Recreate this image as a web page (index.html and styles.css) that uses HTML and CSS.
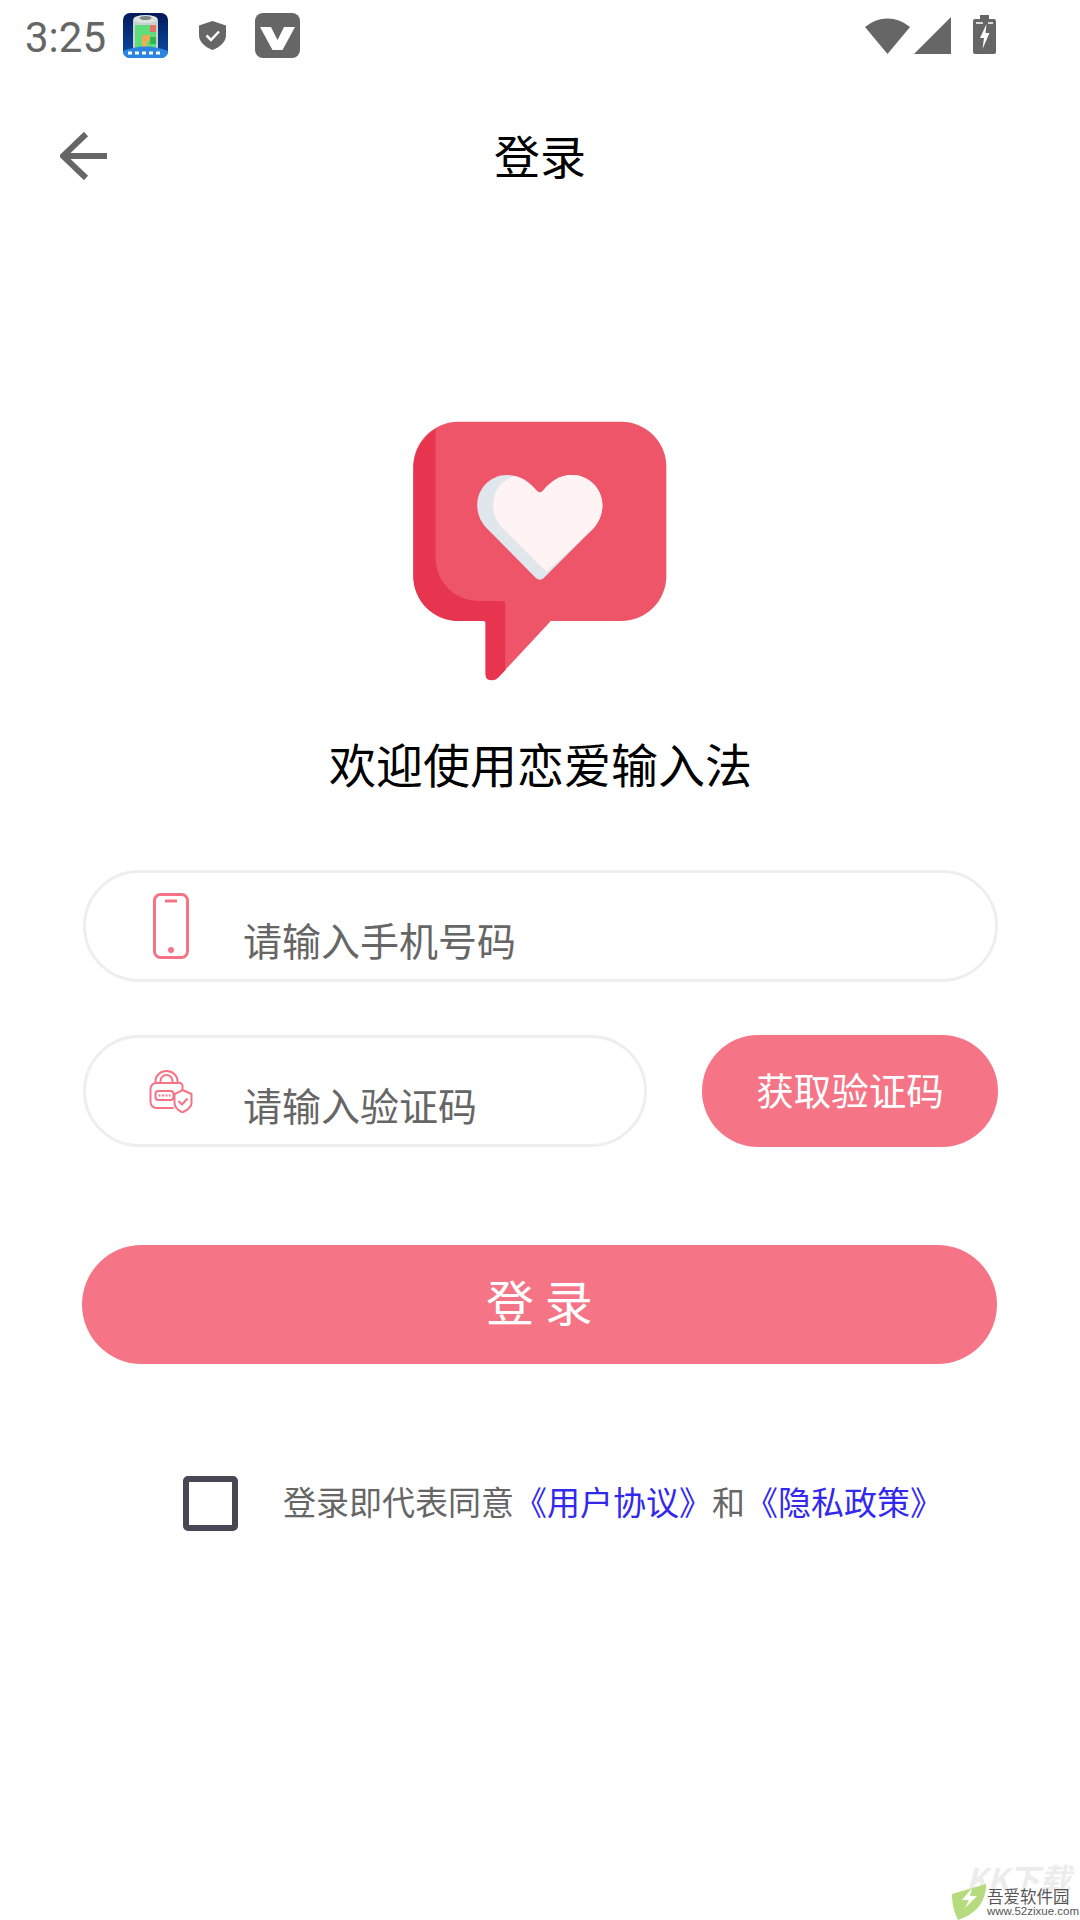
FILE: index.html
```html
<!DOCTYPE html>
<html lang="zh-CN">

<head>
    <meta charset="UTF-8">
    <meta name="viewport" content="width=device-width, initial-scale=1.0">
    <title>登录</title>
    <link rel="stylesheet" href="styles.css">
</head>

<body>
    <div class="status-bar">
        <div class="status-left">
            <span class="time">3:25</span>
            <svg class="app-icon" viewBox="0 0 45 45">
                <defs>
                    <linearGradient id="app-bg" x1="0" y1="0" x2="0" y2="1">
                        <stop offset="0" stop-color="#04185a" />
                        <stop offset="1" stop-color="#0a4fa8" />
                    </linearGradient>
                </defs>
                <rect width="45" height="45" rx="7" fill="url(#app-bg)" />
                <rect x="10" y="5" width="25" height="32" rx="3" fill="#c9d2cf" />
                <ellipse cx="22.500" cy="6" rx="12" ry="4" fill="#dfe3e0" />
                <ellipse cx="22.500" cy="5" rx="6" ry="2" fill="#7d8684" />
                <rect x="12" y="12" width="21" height="24" fill="#5fdc7c" />
                <rect x="27" y="12" width="6" height="7" fill="#e8706a" />
                <rect x="19" y="22" width="8" height="6" fill="#f2a65a" />
                <rect x="27" y="24" width="6" height="7" fill="#2fb84f" />
                <rect x="19" y="28" width="5" height="7" fill="#e9b458" />
                <path d="M0 38 Q22 29 45 38 A7 7 0 0 1 38 45 H7 A7 7 0 0 1 0 38 Z" fill="#2a84e0" />
                <path d="M5 40 H40" stroke="#fff" stroke-width="3" stroke-dasharray="4 3" />
            </svg>
            <svg class="shield-icon" viewBox="0 0 27 29">
                <path d="M13.500 0 L27 4.500 V14 C27 21 21 26 13.500 29 C6 26 0 21 0 14 V4.500 Z" fill="#666" />
                <path d="M7.500 14.500 L12 19 L20 10.500" fill="none" stroke="#fff" stroke-width="2.500" />
            </svg>
            <svg class="v-icon" viewBox="0 0 45 45">
                <rect width="45" height="45" rx="8" fill="#666" />
                <path d="M5 14 H16 L22.500 27 L29 14 H40 L27.500 37 H17.500 Z" fill="#fff" />
            </svg>
        </div>
        <div class="status-right">
            <svg class="wifi-icon" viewBox="0 0 45 38">
                <path d="M0 11 A34 34 0 0 1 45 11 L22.500 38 Z" fill="#666" />
            </svg>
            <svg class="signal-icon" viewBox="0 0 37 37">
                <path d="M37 0 V37 H0 Z" fill="#666" />
            </svg>
            <svg class="battery-icon" viewBox="0 0 23 39">
                <path d="M7 0 H16 V4 H21 A2 2 0 0 1 23 6 V37 A2 2 0 0 1 21 39 H2 A2 2 0 0 1 0 37 V6 A2 2 0 0 1 2 4 H7 Z" fill="#666" />
                <path d="M3 8 H10 M15 8 H20" stroke="#fff" stroke-width="1.500" />
                <path d="M13.500 9 L7 23 H11 L9.500 34 L16.500 18 H12.500 Z" fill="#fff" />
            </svg>
        </div>
    </div>

    <div class="nav-bar">
        <svg class="back-icon" viewBox="0 0 48 48">
            <path d="M47 24 H3 M26 2 L3 24 L26 46" fill="none" stroke="#666" stroke-width="6" />
        </svg>
        <h1 class="nav-title">登录</h1>
    </div>

    <div class="content">
        <svg class="logo" viewBox="66 62 766 780">
            <path d="M205 64 H695 A135 135 0 0 1 830 199 V527 A135 135 0 0 1 695 662 H483 L325 832 Q318 840 305 840 Q287 840 287 822 V662 H205 A135 135 0 0 1 70 527 V199 A135 135 0 0 1 205 64 Z" fill="#ee5569" />
            <path d="M137 86 A135 135 0 0 0 70 199 V527 A135 135 0 0 0 205 662 H280 Q287 662 287 669 V822 Q287 840 305 840 Q318 840 325 832 L346 810 V610 Q346 602 338 602 H265 A128 128 0 0 1 137 474 Z" fill="#e7344f" />
            <path d="M450 276 Q444 276 438 268 C418 245 392 224 352 224 C300 224 262 265 262 315 C262 340 272 365 292 385 L438 533 Q450 544 462 533 L610 385 C628 365 638 340 638 315 C638 265 598 224 546 224 C508 224 482 245 462 268 Q456 276 450 276 Z" fill="#dfe6ec" />
            <path d="M375 228 C340 235 310 265 310 315 C310 340 320 365 340 385 L470 514 L610 385 C628 365 638 340 638 315 C638 265 598 224 546 224 C508 224 482 245 462 268 Q456 276 450 276 Q444 276 438 268 C420 248 400 234 375 228 Z" fill="#fff4f3" />
        </svg>

        <h2 class="welcome">欢迎使用恋爱输入法</h2>

        <div class="field">
            <svg class="field-icon" viewBox="0 0 36 66" height="66">
                <rect x="1.500" y="1.500" width="33" height="63" rx="6" fill="none" stroke="#f67386" stroke-width="3" />
                <path d="M12 8 H24" stroke="#f67386" stroke-width="3" />
                <circle cx="18" cy="57" r="3" fill="#f67386" />
            </svg>
            <span class="field-text">请输入手机号码</span>
        </div>

        <div class="code-row">
            <div class="field code-field">
                <svg class="field-icon" viewBox="0 0 43 43" height="43">
                    <g fill="none" stroke="#f67386" stroke-width="2">
                        <path d="M6 13 V11 A11 10 0 0 1 28 11 V13" />
                        <path d="M11 13 V11 A6 6 0 0 1 23 11 V13" />
                        <path d="M24 38 H7 A6 6 0 0 1 1 32 V19 A6 6 0 0 1 7 13 H29 A3 3 0 0 1 33 16 V20" />
                        <rect x="6" y="21" width="18" height="9" rx="3" />
                        <path d="M9 25.500 H21" stroke-width="2" stroke-dasharray="2 1.500" />
                        <path d="M33 20 L42 24 V33 C42 37 38 40 33 42.500 C28 40 25 37 25 33 V24 Z" />
                        <path d="M29 31 L32.500 34.500 L38 28.500" />
                    </g>
                </svg>
                <span class="field-text">请输入验证码</span>
            </div>
            <div class="code-btn">获取验证码</div>
        </div>

        <div class="login-btn">登 录</div>

        <div class="agreement">
            <span class="checkbox"></span>
            <p class="agreement-text">登录即代表同意<span class="link">《用户协议》</span>和<span class="link">《隐私政策》</span></p>
        </div>
    </div>

    <div class="watermark">
        <span class="wm-back">KK下载</span>
        <svg class="wm-leaf" viewBox="0 0 44 36">
            <path d="M0 10 L34 0 C34 18 24 30 6 36 C2 28 0 20 0 10 Z" fill="#b5db7e" />
            <path d="M20 4 L10 16 H17 L13 24 L25 12 H18 Z" fill="#fff" />
        </svg>
        <span class="wm-name">吾爱软件园</span>
        <span class="wm-url">www.52zixue.com</span>
    </div>
</body>

</html>
```

FILE: styles.css
```css
body {
    font-family: "Noto Sans CJK SC", Roboto, sans-serif;
    font-weight: 400;
    margin: 0;
    height: 1920px;
    background: #fff;
    position: relative;
    overflow: hidden;
}

/* status bar */
.status-bar {
    height: 70px;
    display: flex;
    justify-content: space-between;
    align-items: flex-start;
    padding: 13px 84px 0 25px;
    box-sizing: border-box;
}

.status-left {
    display: flex;
    align-items: center;
}

.time {
    font-family: Roboto, sans-serif;
    font-weight: 400;
    font-size: 42px;
    line-height: 49px;
    height: 45px;
    color: #666;
    width: 98px;
}

.app-icon {
    width: 45px;
    height: 45px;
    margin-right: 31px;
}

.shield-icon {
    width: 27px;
    height: 29px;
    margin-right: 29px;
}

.v-icon {
    width: 45px;
    height: 45px;
}

.status-right {
    display: flex;
    align-items: flex-start;
}

.wifi-icon {
    width: 45px;
    height: 38px;
    margin: 3px 4px 0 0;
}

.signal-icon {
    width: 37px;
    height: 37px;
    margin: 4px 22px 0 0;
}

.battery-icon {
    width: 23px;
    height: 39px;
    margin-top: 2px;
}

/* nav */
.nav-bar {
    height: 172px;
    display: grid;
    grid-template-columns: 1fr auto 1fr;
    align-items: center;
    padding-left: 60px;
}

.back-icon {
    width: 48px;
    height: 48px;
}

.nav-title {
    margin: 0 0 4px -60px;
    font-size: 46px;
    font-weight: 400;
    line-height: 54px;
    color: #000;
}

/* content */
.content {
    display: flex;
    flex-direction: column;
    align-items: stretch;
    padding: 0 82px 0 83px;
}

.logo {
    width: 255px;
    height: 260px;
    margin: 179px auto 0;
    transform: translateX(-1px);
}

.welcome {
    margin: 52px 0 0;
    font-size: 47px;
    font-weight: 400;
    line-height: 60px;
    text-align: center;
    color: #000;
}

.field {
    height: 112px;
    margin-top: 77px;
    padding-left: 40px;
    box-sizing: border-box;
    display: flex;
    align-items: center;
    border: 3px solid #eee;
    border-radius: 56px;
}

.field-icon {
    width: 90px;
    flex-shrink: 0;
    margin-right: 27px;
}

.field-text {
    font-size: 39px;
    line-height: 50px;
    padding-top: 26px;
    color: #666;
}

.code-row {
    display: flex;
    justify-content: space-between;
    margin-top: 53px;
}

.code-field {
    width: 564px;
    margin-top: 0;
}

.code-btn {
    width: 296px;
    height: 112px;
    border-radius: 56px;
    background: #f57486;
    color: #fff;
    font-size: 37.500px;
    line-height: 108px;
    text-align: center;
}

.login-btn {
    height: 119px;
    margin: 98px 1px 0 -1px;
    border-radius: 60px;
    background: #f57486;
    color: #fff;
    font-size: 48px;
    line-height: 111px;
    text-align: center;
}

/* agreement */
.agreement {
    display: flex;
    align-items: center;
    margin-top: 112px;
    padding-left: 100px;
}

.checkbox {
    width: 55px;
    height: 55px;
    box-sizing: border-box;
    border: 6px solid #4a4754;
    border-radius: 5px;
    margin-right: 45px;
    flex-shrink: 0;
}

.agreement-text {
    margin: 0;
    font-size: 33px;
    line-height: 50px;
    color: #666;
    white-space: nowrap;
    transform: translateY(-3px);
}

.link {
    color: #3328ee;
}

/* watermark */
.watermark {
    position: absolute;
    right: 0;
    bottom: 0;
    width: 128px;
    height: 54px;
}

.wm-back {
    position: absolute;
    left: 14px;
    top: 2px;
    font-size: 31px;
    line-height: 20px;
    font-style: italic;
    font-weight: 700;
    color: #ececec;
    white-space: nowrap;
}

.wm-leaf {
    position: absolute;
    left: 0;
    top: 18px;
    width: 44px;
    height: 36px;
}

.wm-name {
    position: absolute;
    left: 35px;
    top: 22px;
    font-size: 16.500px;
    line-height: 16px;
    font-weight: 400;
    color: #555;
    white-space: nowrap;
}

.wm-url {
    position: absolute;
    left: 35px;
    top: 38px;
    font-family: "Liberation Sans", sans-serif;
    font-size: 11.500px;
    line-height: 14px;
    color: #555;
    white-space: nowrap;
}
```
